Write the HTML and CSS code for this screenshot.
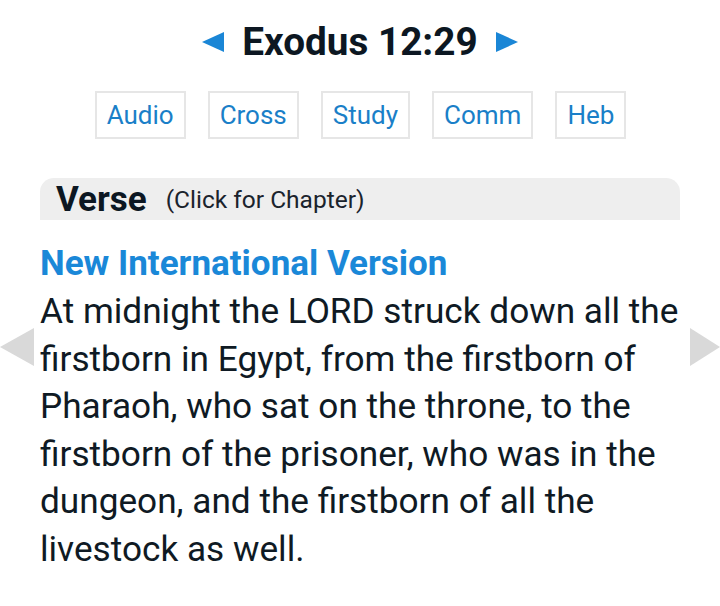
FILE: index.html
```html
<!DOCTYPE html>
<html>
<head>
<meta charset="utf-8">
<link rel="stylesheet" href="styles.css">
</head>
<body>
<div class="page">
  <div class="title">
    <span class="tri tri-left"></span>
    <h1>Exodus 12:29</h1>
    <span class="tri tri-right"></span>
  </div>
  <div class="buttons">
    <a class="btn">Audio</a>
    <a class="btn">Cross</a>
    <a class="btn">Study</a>
    <a class="btn">Comm</a>
    <a class="btn">Heb</a>
  </div>
  <div class="content">
    <div class="verse-head"><span class="vh-main">Verse</span><span class="vh-sub">(Click for Chapter)</span></div>
    <div class="version">New International Version</div>
    <p class="text">At midnight the LORD struck down all the firstborn in Egypt, from the firstborn of Pharaoh, who sat on the throne, to the firstborn of the prisoner, who was in the dungeon, and the firstborn of all the livestock as well.</p>
  </div>
  <span class="side side-left"></span>
  <span class="side side-right"></span>
</div>
</body>
</html>
```
FILE: styles.css
```css
html, body {
  margin: 0;
  padding: 0;
  background: #fff;
}
body {
  font-family: Roboto, "Liberation Sans", sans-serif;
  color: #0f1a24;
}
.page {
  position: relative;
  width: 720px;
  height: 606px;
  overflow: hidden;
}
.title {
  display: flex;
  justify-content: center;
  align-items: center;
  gap: 18px;
  padding-top: 14px;
  height: 56px;
}
.title h1 {
  margin: 0;
  font-size: 38.7px;
  font-weight: 700;
  color: #0c1722;
  line-height: 56px;
}
.tri {
  width: 0;
  height: 0;
  border-top: 10px solid transparent;
  border-bottom: 10px solid transparent;
}
.tri-left { border-right: 22px solid #1a86d6; }
.tri-right { border-left: 22px solid #1a86d6; }
.buttons {
  display: flex;
  justify-content: center;
  gap: 22px;
  margin-top: 21px;
  padding-left: 1px;
}
.btn {
  display: block;
  height: 44px;
  line-height: 44px;
  padding: 0 10px;
  border: 2px solid #e6e6e6;
  color: #1a7fc8;
  font-size: 26px;
}
.content {
  width: 640px;
  margin: 39px auto 0;
}
.verse-head {
  background: #eeeeee;
  border-radius: 14px 14px 0 0;
  height: 42px;
  display: flex;
  align-items: center;
  padding-left: 16px;
  gap: 19px;
}
.vh-main {
  font-size: 35px;
  font-weight: 700;
  color: #0c1722;
}
.vh-sub {
  font-size: 24.5px;
  color: #1a232c;
}
.version {
  margin-top: 22px;
  font-size: 35px;
  font-weight: 700;
  color: #1a88d8;
  line-height: 44px;
}
.text {
  margin: 2px 0 0;
  font-size: 35.2px;
  line-height: 47.6px;
  color: #0f1a24;
}
.side {
  position: absolute;
  top: 328px;
  width: 0;
  height: 0;
  border-top: 19px solid transparent;
  border-bottom: 19px solid transparent;
}
.side-left { left: 0; border-right: 34px solid #d9d9d9; }
.side-right { right: 0; border-left: 30px solid #d9d9d9; }
```
